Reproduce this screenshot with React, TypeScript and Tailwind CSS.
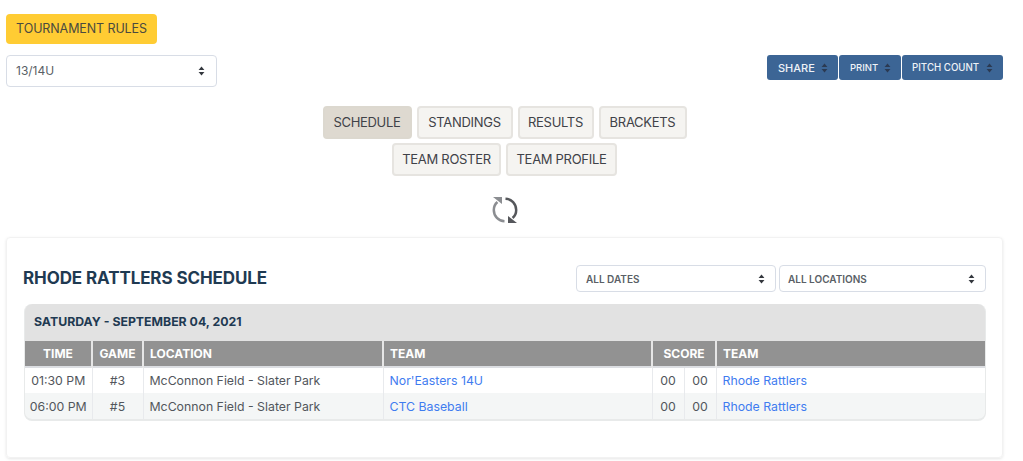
import type { ReactNode } from "react";

const font = "font-['Inter','Open_Sans',sans-serif]";

function Updown({ className }: { className: string }) {
  return (
    <svg viewBox="0 0 8 12" className={className} fill="currentColor">
      <path d="M4 0.5 7.5 4.8H0.5Z" />
      <path d="M4 11.5 0.5 7.2H7.5Z" />
    </svg>
  );
}

function FakeSelect({ label, className, text }: { label: string; className: string; text: string }) {
  return (
    <div className={`flex items-center justify-between bg-white border border-[#d8dde6] rounded-[4px] text-[#5a5f66] ${className}`}>
      <span className={text}>{label}</span>
      <Updown className="w-[7px] h-[10px] text-[#33373d]" />
    </div>
  );
}

function ShareBtn({ children, className }: { children: ReactNode; className: string }) {
  return (
    <button className={`flex items-center justify-between h-[25px] pt-[1px] bg-[#3c6595] text-[#eef2f7] rounded-[3px] ${className}`}>
      {children}
      <Updown className="w-[7px] h-[10px] text-[#2b3a52]" />
    </button>
  );
}

function NavBtn({ label, width, active }: { label: string; width: string; active?: boolean }) {
  return (
    <button
      className={`h-[33px] rounded-[4px] border-2 text-[13px] text-[#3f4248] tracking-[-0.3px] ${width} ${
        active ? "bg-[#ded9d0] border-[#dcd8cf]" : "bg-[#f5f4f1] border-[#e6e4e0]"
      }`}
    >
      {label}
    </button>
  );
}

const th = "bg-[#929292] text-white text-[12px] font-bold border-l-2 border-[#e6e6e6] first:border-l-0 px-[6px] h-[26px] p-0";
const td = "border-l border-[#e8eaed] first:border-l-0 text-[12.3px] text-[#52565c] px-[6px] pt-[2px] h-[26px] whitespace-nowrap";
const link = "text-[#3f7cf0]";

const rows = [
  { time: "01:30 PM", game: "#3", team: "Nor'Easters 14U", bg: "bg-white" },
  { time: "06:00 PM", game: "#5", team: "CTC Baseball", bg: "bg-[#f4f6f6]" },
];

export default function App() {
  return (
    <div className={`w-[1023px] h-[461px] overflow-hidden bg-white ${font}`}>
      <div className="w-[997px] ml-[6px] pt-[14px]">
        <button className="block h-[30px] w-[151px] bg-[#ffcc33] rounded-[4px] text-[12.5px] text-[#4a4a40] tracking-[-0.1px]">
          TOURNAMENT RULES
        </button>

        <div className="flex items-start justify-between mt-[11px]">
          <FakeSelect label="13/14U" className="w-[211px] h-[32px] pl-[9px] pr-[11px]" text="text-[12px]" />
          <div className="flex gap-[1px]">
            <ShareBtn className="w-[71px] pl-[11px] pr-[10px] text-[11px] font-medium">SHARE</ShareBtn>
            <ShareBtn className="w-[62px] pl-[11px] pr-[10px] text-[9.5px] font-medium">PRINT</ShareBtn>
            <ShareBtn className="w-[101px] pl-[10px] pr-[10px] text-[9.7px] font-medium">PITCH COUNT</ShareBtn>
          </div>
        </div>

        <div className="flex justify-center gap-[5px] mt-[19px]">
          <NavBtn label="SCHEDULE" width="w-[89px]" active />
          <NavBtn label="STANDINGS" width="w-[96px]" />
          <NavBtn label="RESULTS" width="w-[76px]" />
          <NavBtn label="BRACKETS" width="w-[88px]" />
        </div>
        <div className="flex justify-center gap-[5px] mt-[4px]">
          <NavBtn label="TEAM ROSTER" width="w-[109px]" />
          <NavBtn label="TEAM PROFILE" width="w-[111px]" />
        </div>

        <div className="flex justify-center mt-[20px]">
          <svg viewBox="0 0 28 28" className="w-[28px] h-[28px]" fill="none">
            <path d="M13.5 25.2C7.5 25 2.8 20.2 2.8 14c0-3.2 1.3-6 3.6-8" stroke="#8b8d91" strokeWidth="2.5" />
            <path d="M11 8V1H2Z" fill="#8b8d91" />
            <path d="M14.5 2.8C20.5 3 25.2 7.8 25.2 14c0 3.2-1.3 6-3.6 8" stroke="#55575b" strokeWidth="2.5" />
            <path d="M17 20V27H26Z" fill="#55575b" />
          </svg>
        </div>

        <div className="mt-[13px] h-[221px] rounded-[4px] border border-[#f2f2f2] shadow-[0_1px_3px_rgba(0,0,0,0.1)] pl-[17px] pr-[16px] pt-[27px]">
          <div className="flex items-center justify-between">
            <h2 className="text-[17px] font-bold text-[#1f3a52] tracking-[-0.1px] -ml-[1px] pt-[1px]">RHODE RATTLERS SCHEDULE</h2>
            <div className="flex gap-[3px]">
              <FakeSelect label="ALL DATES" className="w-[200px] h-[27px] pl-[9px] pr-[10px]" text="text-[10px] font-semibold pt-[1px]" />
              <FakeSelect label="ALL LOCATIONS" className="w-[207px] h-[27px] pl-[8px] pr-[10px]" text="text-[10px] font-semibold pt-[1px]" />
            </div>
          </div>

          <div className="mt-[12px] w-[962px] rounded-[8px] overflow-hidden border-b-2 border-x border-[#e8eaea] bg-[#e2e2e2]">
            <div className="h-[37px] flex items-center pl-[9px] text-[12.3px] font-bold text-[#1f3a52]">
              SATURDAY - SEPTEMBER 04, 2021
            </div>
            <table className="w-full table-fixed border-collapse">
              <colgroup>
                <col className="w-[67px]" />
                <col className="w-[51px]" />
                <col className="w-[240px]" />
                <col className="w-[269px]" />
                <col className="w-[32px]" />
                <col className="w-[32px]" />
                <col />
              </colgroup>
              <thead>
                <tr className="border-b-2 border-[#dcdee2]">
                  <th className={`${th} text-center`}>TIME</th>
                  <th className={`${th} text-center`}>GAME</th>
                  <th className={`${th} text-left`}>LOCATION</th>
                  <th className={`${th} text-left`}>TEAM</th>
                  <th colSpan={2} className={`${th} text-center`}>SCORE</th>
                  <th className={`${th} text-left`}>TEAM</th>
                </tr>
              </thead>
              <tbody>
                {rows.map((r) => (
                  <tr key={r.time} className={r.bg}>
                    <td className={`${td} text-center !px-0`}>{r.time}</td>
                    <td className={`${td} text-center`}>{r.game}</td>
                    <td className={td}>McConnon Field - Slater Park</td>
                    <td className={td}><span className={link}>{r.team}</span></td>
                    <td className={`${td} text-center !px-0`}>00</td>
                    <td className={`${td} text-center !px-0`}>00</td>
                    <td className={td}><span className={link}>Rhode Rattlers</span></td>
                  </tr>
                ))}
              </tbody>
            </table>
          </div>
        </div>
      </div>
    </div>
  );
}
